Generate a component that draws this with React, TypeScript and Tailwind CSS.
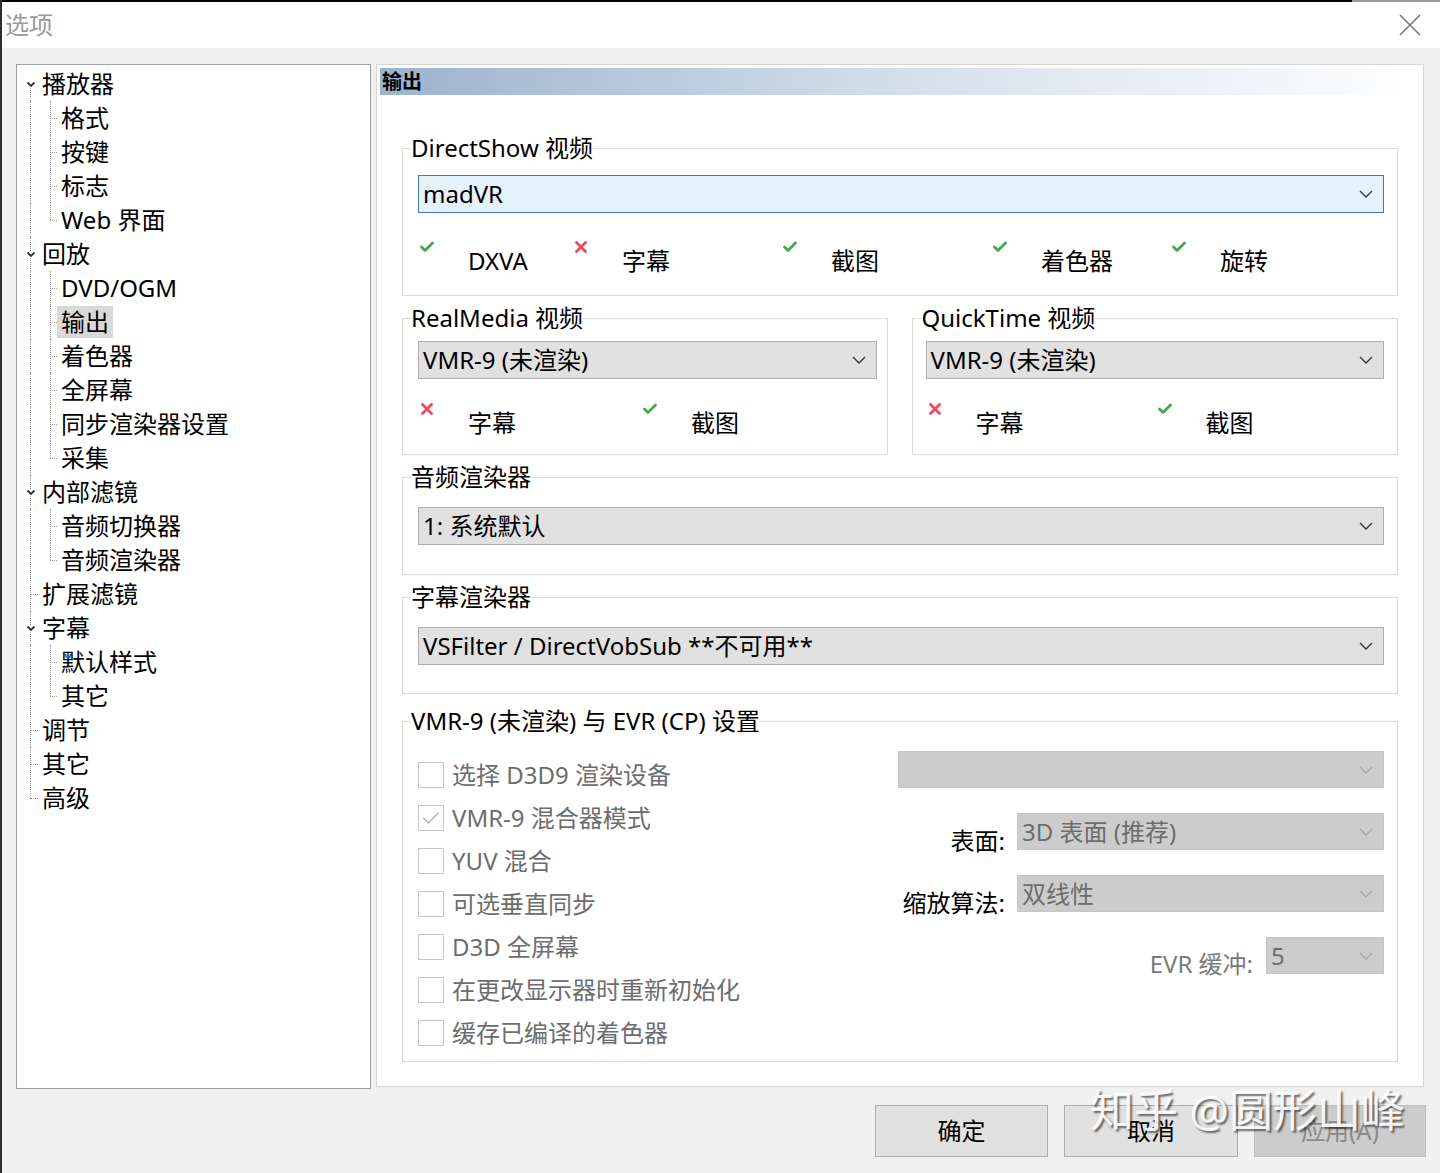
import React from "react";

type TreeNode = { label: string; children?: string[] };

const TREE: TreeNode[] = [
  { label: "播放器", children: ["格式", "按键", "标志", "Web 界面"] },
  { label: "回放", children: ["DVD/OGM", "输出", "着色器", "全屏幕", "同步渲染器设置", "采集"] },
  { label: "内部滤镜", children: ["音频切换器", "音频渲染器"] },
  { label: "扩展滤镜" },
  { label: "字幕", children: ["默认样式", "其它"] },
  { label: "调节" },
  { label: "其它" },
  { label: "高级" },
];

function TreeChevron() {
  return (
    <svg width="10" height="7" viewBox="0 0 10 7">
      <path d="M1.5 1.5 L5 5 L8.5 1.5" fill="none" stroke="#333" strokeWidth="1.8" />
    </svg>
  );
}

function ComboChevron({ color }: { color: string }) {
  return (
    <svg width="14" height="8" viewBox="0 0 14 8">
      <path d="M1 1 L7 7 L13 1" fill="none" stroke={color} strokeWidth="1.3" />
    </svg>
  );
}

function CheckIcon() {
  return (
    <svg width="14" height="12" viewBox="0 0 14 12">
      <path d="M1.5 6 L5 9.5 L12.5 2" fill="none" stroke="#45a852" strokeWidth="2.8" strokeLinecap="round" strokeLinejoin="round" />
    </svg>
  );
}

function CrossIcon() {
  return (
    <svg width="14" height="12" viewBox="0 0 14 12">
      <path d="M2.5 1.5 L11.5 10.5 M11.5 1.5 L2.5 10.5" fill="none" stroke="#e8495c" strokeWidth="2.8" strokeLinecap="round" />
    </svg>
  );
}

function TreeView() {
  const rows: React.ReactNode[] = [];
  TREE.forEach((n, i) => {
    const firstTop = i === 0;
    const lastTop = i === TREE.length - 1;
    rows.push(
      <div key={n.label + i} className="flex h-[34px] items-center">
        <div className="relative h-full w-[18px] shrink-0">
          <div
            className={`absolute left-[10px] border-l border-dotted border-[#9a9a9a] ${firstTop ? "top-1/2" : "top-0"} ${lastTop ? "bottom-1/2" : "bottom-0"}`}
          />
          {n.children ? (
            <span className="absolute left-[6px] top-[14px] flex bg-white">
              <TreeChevron />
            </span>
          ) : (
            <div className="absolute left-[10px] right-0 top-1/2 border-t border-dotted border-[#9a9a9a]" />
          )}
        </div>
        <span className="px-[4px] leading-[32px]">{n.label}</span>
      </div>
    );
    n.children?.forEach((c, j) => {
      const lastChild = j === n.children!.length - 1;
      const selected = c === "输出";
      rows.push(
        <div key={n.label + c} className="flex h-[34px] items-center">
          <div className="relative h-full w-[18px] shrink-0">
            <div className="absolute bottom-0 left-[10px] top-0 border-l border-dotted border-[#9a9a9a]" />
          </div>
          <div className="relative h-full w-[19px] shrink-0">
            <div
              className={`absolute left-[12px] top-0 border-l border-dotted border-[#9a9a9a] ${lastChild ? "bottom-1/2" : "bottom-0"}`}
            />
            <div className="absolute left-[12px] right-0 top-1/2 border-t border-dotted border-[#9a9a9a]" />
          </div>
          <span className={`px-[4px] leading-[32px] ${selected ? "bg-[#d9d9d9]" : ""}`}>{c}</span>
        </div>
      );
    });
  });
  return <div className="pl-[3px] pt-[2px]">{rows}</div>;
}

function Combo({
  value,
  variant = "normal",
  className = "",
}: {
  value: string;
  variant?: "focus" | "normal" | "disabled";
  className?: string;
}) {
  const styles =
    variant === "focus"
      ? "h-[38px] bg-[#e5f1fb] border-[#3a7fb0] text-black"
      : variant === "disabled"
      ? "h-[37px] bg-[#cccccc] border-[#c6c6c6] text-[#6d6d6d]"
      : "h-[38px] bg-[#e1e1e1] border-[#adadad] text-black";
  return (
    <div className={`flex items-center justify-between border pl-[4px] pr-[10px] ${styles} ${className}`}>
      <span className="whitespace-nowrap text-[24px] leading-none">{value}</span>
      <ComboChevron color={variant === "disabled" ? "#a8a8a8" : "#333"} />
    </div>
  );
}

function Flag({ ok, label, className = "" }: { ok: boolean; label: string; className?: string }) {
  return (
    <div className={`flex shrink-0 items-start ${className}`}>
      <div className="mt-[3px] flex w-[14px]">{ok ? <CheckIcon /> : <CrossIcon />}</div>
      <span className="ml-[34px] mt-[8px] text-[24px] leading-[30px]">{label}</span>
    </div>
  );
}

function Legend({ children, className = "" }: { children: React.ReactNode; className?: string }) {
  return <legend className={`text-[24px] leading-[30px] ${className}`}>{children}</legend>;
}

function CheckRow({ label, checked = false }: { label: string; checked?: boolean }) {
  return (
    <div className="flex h-[43px] items-center">
      <div className="flex h-[26px] w-[26px] items-center justify-center border border-[#c8c8c8] bg-white">
        {checked && (
          <svg width="18" height="14" viewBox="0 0 18 14">
            <path d="M1.5 7 L6.5 12 L16.5 1.5" fill="none" stroke="#b4b4b4" strokeWidth="1.4" />
          </svg>
        )}
      </div>
      <span className="ml-[8px] whitespace-nowrap text-[24px] leading-none text-[#6d6d6d]">{label}</span>
    </div>
  );
}

export default function App() {
  return (
    <div className="relative h-[1173px] w-[1440px] overflow-hidden border-l-[2px] border-[#2e2e2e] bg-[#f0f0f0] font-['Noto_Sans','Noto_Sans_CJK_SC',sans-serif] text-black">
      {/* Title bar */}
      <div className="flex h-[2px]">
        <div className="w-[1350px] bg-black" />
        <div className="flex-1 bg-[#9a9a9a]" />
      </div>
      <div className="flex h-[46px] items-center justify-between bg-white pl-[3px] pr-[18px]">
        <span className="text-[24px] leading-none text-[#9a9a9a]">选项</span>
        <svg width="24" height="24" viewBox="0 0 24 24">
          <path d="M2 2 L22 22 M22 2 L2 22" stroke="#777" strokeWidth="1.6" />
        </svg>
      </div>

      {/* Body */}
      <div className="pl-[14px] pr-[16px] pt-[16px]">
        <div className="flex items-start gap-[5px]">
          {/* Tree */}
          <div className="h-[1025px] w-[355px] border border-[#a0a0a0] bg-white text-[24px]">
            <TreeView />
          </div>

          {/* Page */}
          <div className="h-[1023px] flex-1 border border-[#d6d6d6] bg-white px-[3px] pt-[3px]">
            <div className="flex h-[27px] items-center bg-linear-to-r from-[#9cb3ce] via-[#d4dfeb] to-white pl-[2px] text-[20px] font-bold leading-none">
              输出
            </div>

            <div className="px-[22px]">
              {/* DirectShow */}
              <fieldset className="mt-[38px] border border-[#dcdcdc] pb-[19px] pl-[15px] pr-[13px]">
                <Legend className="ml-[-7px]">DirectShow 视频</Legend>
                <Combo value="madVR" variant="focus" className="mt-[12px]" />
                <div className="mt-[25px] flex pl-[2px]">
                  <Flag ok label="DXVA" className="w-[154px]" />
                  <Flag ok={false} label="字幕" className="w-[209px]" />
                  <Flag ok label="截图" className="w-[210px]" />
                  <Flag ok label="着色器" className="w-[179px]" />
                  <Flag ok label="旋转" />
                </div>
              </fieldset>

              {/* RealMedia / QuickTime */}
              <div className="mt-[7px] flex gap-[24px]">
                <fieldset className="flex-1 border border-[#dcdcdc] pb-[16px] pl-[15px] pr-[10px]">
                  <Legend className="ml-[-7px]">RealMedia 视频</Legend>
                  <Combo value="VMR-9 (未渲染)" className="mt-[8px]" />
                  <div className="mt-[21px] flex pl-[2px]">
                    <Flag ok={false} label="字幕" className="w-[223px]" />
                    <Flag ok label="截图" />
                  </div>
                </fieldset>
                <fieldset className="flex-1 border border-[#dcdcdc] pb-[16px] pl-[13px] pr-[13px]">
                  <Legend className="ml-[-4px]">QuickTime 视频</Legend>
                  <Combo value="VMR-9 (未渲染)" className="mt-[8px]" />
                  <div className="mt-[21px] flex pl-[2px]">
                    <Flag ok={false} label="字幕" className="w-[230px]" />
                    <Flag ok label="截图" />
                  </div>
                </fieldset>
              </div>

              {/* Audio renderer */}
              <fieldset className="mt-[7px] border border-[#dcdcdc] pb-[29px] pl-[15px] pr-[13px]">
                <Legend className="ml-[-7px]">音频渲染器</Legend>
                <Combo value="1: 系统默认" className="mt-[15px]" />
              </fieldset>

              {/* Subtitle renderer */}
              <fieldset className="mt-[7px] border border-[#dcdcdc] pb-[28px] pl-[15px] pr-[13px]">
                <Legend className="ml-[-7px]">字幕渲染器</Legend>
                <Combo value="VSFilter / DirectVobSub **不可用**" className="mt-[15px]" />
              </fieldset>

              {/* VMR-9 / EVR */}
              <fieldset className="mt-[12px] border border-[#dcdcdc] pb-[7px] pl-[15px] pr-[13px]">
                <Legend className="ml-[-7px]">VMR-9 (未渲染) 与 EVR (CP) 设置</Legend>
                <div className="flex">
                  <div className="mt-[17px] flex-1">
                    <CheckRow label="选择 D3D9 渲染设备" />
                    <CheckRow label="VMR-9 混合器模式" checked />
                    <CheckRow label="YUV 混合" />
                    <CheckRow label="可选垂直同步" />
                    <CheckRow label="D3D 全屏幕" />
                    <CheckRow label="在更改显示器时重新初始化" />
                    <CheckRow label="缓存已编译的着色器" />
                  </div>
                  <div className="w-[486px] pt-[15px]">
                    <Combo value="" variant="disabled" />
                    <div className="mt-[25px] flex h-[37px] items-start justify-end">
                      <span className="mr-[12px] mt-[13px] text-[24px] leading-[30px]">表面:</span>
                      <Combo value="3D 表面 (推荐)" variant="disabled" className="w-[367px]" />
                    </div>
                    <div className="mt-[25px] flex h-[37px] items-start justify-end">
                      <span className="mr-[12px] mt-[13px] text-[24px] leading-[30px]">缩放算法:</span>
                      <Combo value="双线性" variant="disabled" className="w-[367px]" />
                    </div>
                    <div className="mt-[25px] flex h-[37px] items-start justify-end">
                      <span className="mr-[13px] mt-[12px] text-[24px] leading-[30px] text-[#7a7a7a]">EVR 缓冲:</span>
                      <Combo value="5" variant="disabled" className="w-[118px]" />
                    </div>
                  </div>
                </div>
              </fieldset>
            </div>
          </div>
        </div>

        {/* Buttons */}
        <div className="mt-[16px] flex justify-end gap-[16px]">
          <button type="button" className="h-[52px] w-[173px] border border-[#adadad] bg-[#e1e1e1] text-[24px]">
            确定
          </button>
          <button type="button" className="h-[52px] w-[174px] border border-[#adadad] bg-[#e1e1e1] text-[24px]">
            取消
          </button>
          <button type="button" className="mr-[-2px] h-[52px] w-[172px] border border-[#bfbfbf] bg-[#cccccc] text-[24px] text-[#8a8a8a]">
            应用(A)
          </button>
        </div>
      </div>

      {/* Watermark */}
      <div className="pointer-events-none absolute left-[1088px] top-[1088px] whitespace-nowrap text-[44px] leading-none text-white/90 [text-shadow:2px_2px_2px_rgba(0,0,0,0.55)]">
        知乎 @圆形山峰
      </div>
    </div>
  );
}
